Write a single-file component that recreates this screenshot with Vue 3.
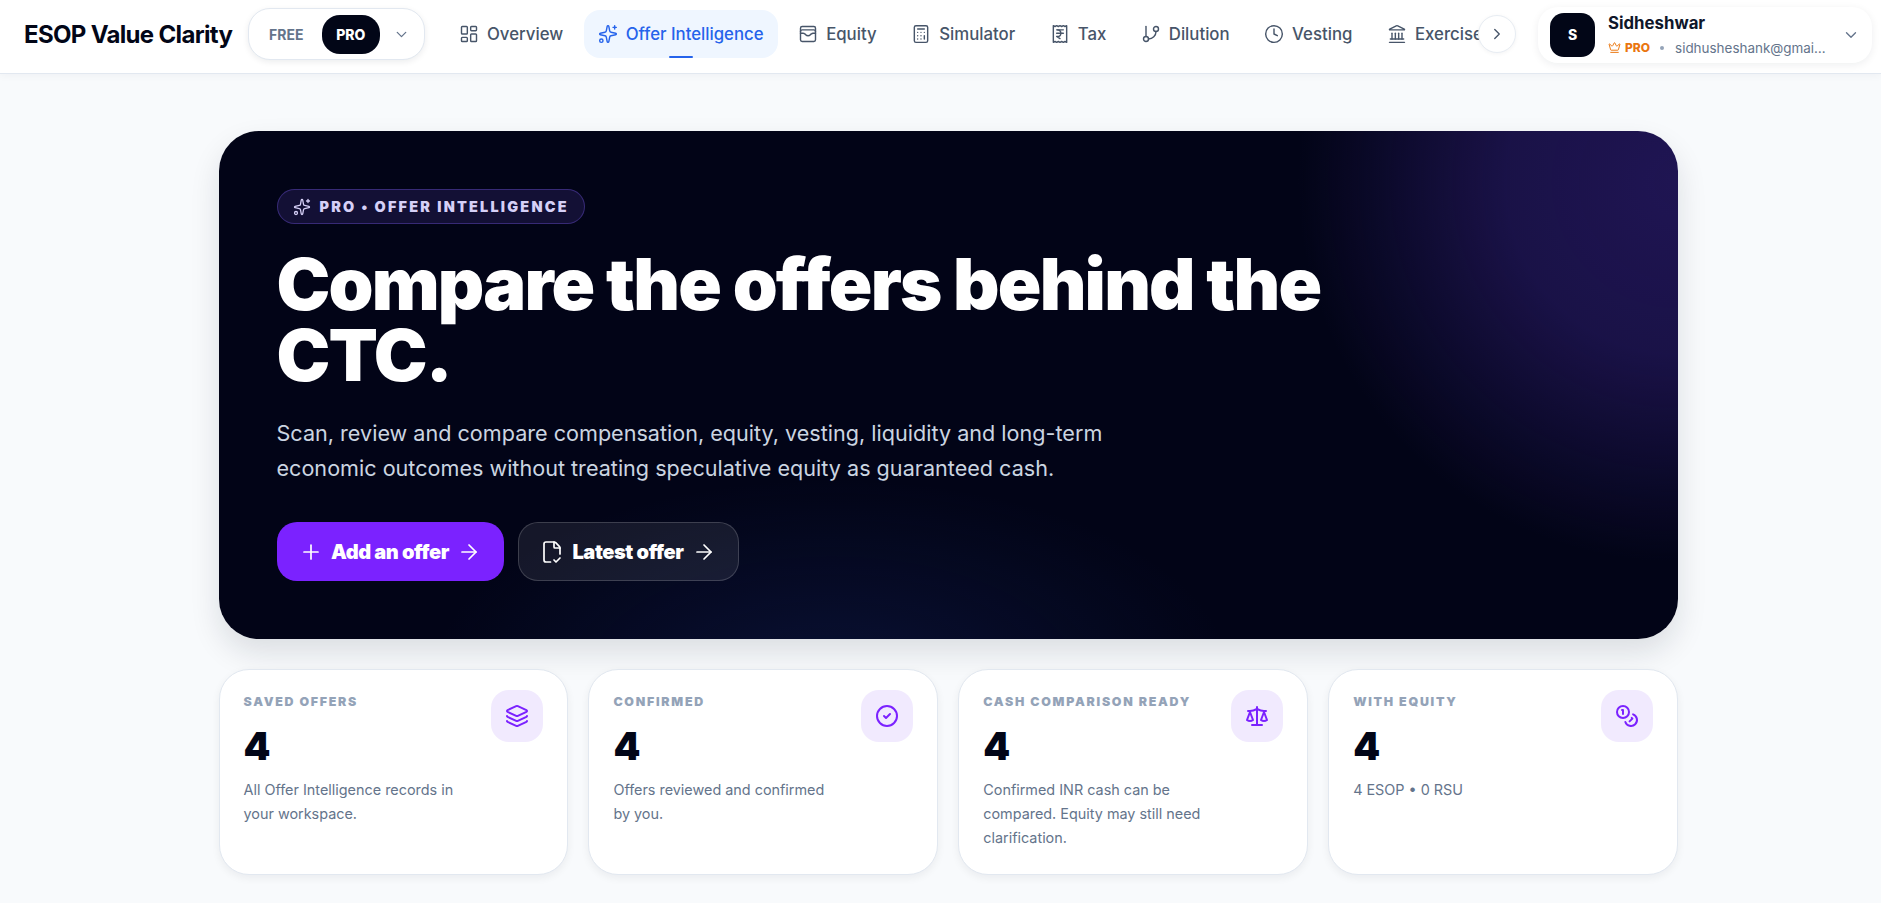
<script setup>
const stroke = {
  dashboard: '<rect x="3" y="3" width="7" height="9" rx="1"/><rect x="14" y="3" width="7" height="5" rx="1"/><rect x="14" y="12" width="7" height="9" rx="1"/><rect x="3" y="16" width="7" height="5" rx="1"/>',
  sparkles: '<path d="M11.017 2.814a1 1 0 0 1 1.966 0l1.051 5.558a2 2 0 0 0 1.594 1.594l5.558 1.051a1 1 0 0 1 0 1.966l-5.558 1.051a2 2 0 0 0-1.594 1.594l-1.051 5.558a1 1 0 0 1-1.966 0l-1.051-5.558a2 2 0 0 0-1.594-1.594l-5.558-1.051a1 1 0 0 1 0-1.966l5.558-1.051a2 2 0 0 0 1.594-1.594z"/><path d="M20 2v4"/><path d="M22 4h-4"/><circle cx="4" cy="20" r="2"/>',
  wallet: '<rect x="3" y="3" width="18" height="18" rx="2"/><path d="M3 9a2 2 0 0 1 2-2h14a2 2 0 0 1 2 2"/><path d="M3 11h3c.8 0 1.6.3 2.1.9l1.1.9c1.6 1.6 4.1 1.6 5.7 0l1.1-.9c.5-.5 1.3-.9 2.1-.9H21"/>',
  calculator: '<rect x="4" y="2" width="16" height="20" rx="2"/><path d="M8 6h8"/><path d="M16 14v4"/><path d="M16 10h.01"/><path d="M12 10h.01"/><path d="M8 10h.01"/><path d="M12 14h.01"/><path d="M8 14h.01"/><path d="M12 18h.01"/><path d="M8 18h.01"/>',
  receipt: '<path d="M4 2v20l2-1 2 1 2-1 2 1 2-1 2 1 2-1 2 1V2l-2 1-2-1-2 1-2-1-2 1-2-1-2 1Z"/><path d="M8 7h8"/><path d="M12 17.5 8 15h1a4 4 0 0 0 0-8"/><path d="M8 11h8"/>',
  branch: '<path d="M6 3v12"/><circle cx="18" cy="6" r="3"/><circle cx="6" cy="18" r="3"/><path d="M18 9a9 9 0 0 1-9 9"/>',
  clock: '<circle cx="12" cy="12" r="10"/><path d="M12 6v6l4 2"/>',
  landmark: '<path d="M3 22h18"/><path d="M4 18h16"/><path d="M6 18v-7"/><path d="M10 18v-7"/><path d="M14 18v-7"/><path d="M18 18v-7"/><path d="M11.12 2.198a2 2 0 0 1 1.76.006l7.866 3.847c.476.233.31.949-.22.949H3.474c-.53 0-.695-.716-.22-.949z"/>',
  layers: '<path d="m12.83 2.18a2 2 0 0 0-1.66 0L2.6 6.08a1 1 0 0 0 0 1.83l8.58 3.91a2 2 0 0 0 1.66 0l8.58-3.9a1 1 0 0 0 0-1.83z"/><path d="M2 12a1 1 0 0 0 .58.91l8.6 3.91a2 2 0 0 0 1.65 0l8.58-3.9A1 1 0 0 0 22 12"/><path d="M2 17a1 1 0 0 0 .58.91l8.6 3.91a2 2 0 0 0 1.65 0l8.58-3.9A1 1 0 0 0 22 17"/>',
  check: '<circle cx="12" cy="12" r="10"/><path d="m9 12 2 2 4-4"/>',
  scale: '<path d="m16 16 3-8 3 8c-.87.65-1.92 1-3 1s-2.13-.35-3-1Z"/><path d="m2 16 3-8 3 8c-.87.65-1.92 1-3 1s-2.13-.35-3-1Z"/><path d="M7 21h10"/><path d="M12 3v18"/><path d="M3 7h2c2 0 5-1 7-2 2 1 5 2 7 2h2"/>',
  coins: '<circle cx="8" cy="8" r="6"/><path d="M18.09 10.37A6 6 0 1 1 10.34 18"/><path d="M7 6h1v4"/><path d="m16.71 13.88.7.71-2.82 2.82"/>',
  plus: '<path d="M5 12h14"/><path d="M12 5v14"/>',
  arrow: '<path d="M5 12h14"/><path d="m12 5 7 7-7 7"/>',
  file: '<path d="M10.5 22H6a2 2 0 0 1-2-2V4a2 2 0 0 1 2-2h8a2.4 2.4 0 0 1 1.706.706l3.588 3.588A2.4 2.4 0 0 1 20 8v6"/><path d="M14 2v5a1 1 0 0 0 1 1h5"/><path d="m14 20 2 2 4-4"/>',
  crown: '<path d="M11.562 3.266a.5.5 0 0 1 .876 0L15.39 8.87a1 1 0 0 0 1.516.294L21.183 5.5a.5.5 0 0 1 .798.519l-2.834 10.246a1 1 0 0 1-.956.734H5.81a1 1 0 0 1-.957-.734L2.02 6.02a.5.5 0 0 1 .798-.519l4.276 3.664a1 1 0 0 0 1.516-.294z"/><path d="M5 21h14"/>',
  down: '<path d="m6 9 6 6 6-6"/>',
  right: '<path d="m9 18 6-6-6-6"/>',
}

const navItems = [
  { label: 'Overview', icon: stroke.dashboard },
  { label: 'Offer Intelligence', icon: stroke.sparkles, active: true },
  { label: 'Equity', icon: stroke.wallet },
  { label: 'Simulator', icon: stroke.calculator },
  { label: 'Tax', icon: stroke.receipt },
  { label: 'Dilution', icon: stroke.branch },
  { label: 'Vesting', icon: stroke.clock },
  { label: 'Exercise', icon: stroke.landmark },
]

const stats = [
  { label: 'Saved offers', value: 4, text: 'All Offer Intelligence records in your workspace.', icon: stroke.layers },
  { label: 'Confirmed', value: 4, text: 'Offers reviewed and confirmed by you.', icon: stroke.check },
  { label: 'Cash comparison ready', value: 4, text: 'Confirmed INR cash can be compared. Equity may still need clarification.', icon: stroke.scale },
  { label: 'With equity', value: 4, text: '4 ESOP • 0 RSU', icon: stroke.coins },
]
</script>

<template>
  <div class="page">
    <header class="topbar">
      <div class="brand">ESOP Value Clarity</div>

      <div class="plan-switch">
        <span class="plan-free">FREE</span>
        <span class="plan-pro">PRO</span>
        <svg class="ico plan-chevron" viewBox="0 0 24 24" v-html="stroke.down"></svg>
      </div>

      <div class="nav-wrap">
        <nav class="nav">
          <a v-for="item in navItems" :key="item.label" class="nav-item" :class="{ active: item.active }">
            <svg class="ico nav-ico" viewBox="0 0 24 24" v-html="item.icon"></svg>
            {{ item.label }}
          </a>
        </nav>
        <button type="button" class="nav-more">
          <svg class="ico" viewBox="0 0 24 24" v-html="stroke.right"></svg>
        </button>
      </div>

      <div class="user">
        <div class="avatar">S</div>
        <div class="user-info">
          <div class="user-name">Sidheshwar</div>
          <div class="user-meta">
            <svg class="ico crown" viewBox="0 0 24 24" v-html="stroke.crown"></svg>
            <span class="user-plan">PRO</span>
            <span class="user-dot"></span>
            <span class="user-email">sidhusheshank@gmail.com</span>
          </div>
        </div>
        <svg class="ico user-chevron" viewBox="0 0 24 24" v-html="stroke.down"></svg>
      </div>
    </header>

    <main class="content">
      <section class="hero">
        <div class="hero-badge">
          <svg class="ico badge-ico" viewBox="0 0 24 24" v-html="stroke.sparkles"></svg>
          PRO • OFFER INTELLIGENCE
        </div>
        <h1 class="hero-title">Compare the offers behind the CTC.</h1>
        <p class="hero-text">
          Scan, review and compare compensation, equity, vesting, liquidity and long-term
          economic outcomes without treating speculative equity as guaranteed cash.
        </p>
        <div class="hero-actions">
          <button type="button" class="btn btn-primary">
            <svg class="ico btn-ico" viewBox="0 0 24 24" v-html="stroke.plus"></svg>
            <span>Add an offer</span>
            <svg class="ico btn-ico" viewBox="0 0 24 24" v-html="stroke.arrow"></svg>
          </button>
          <button type="button" class="btn btn-ghost">
            <svg class="ico btn-ico" viewBox="0 0 24 24" v-html="stroke.file"></svg>
            <span>Latest offer</span>
            <svg class="ico btn-ico" viewBox="0 0 24 24" v-html="stroke.arrow"></svg>
          </button>
        </div>
      </section>

      <section class="stats">
        <article v-for="stat in stats" :key="stat.label" class="stat">
          <div class="stat-head">
            <div>
              <div class="stat-label">{{ stat.label }}</div>
              <div class="stat-value">{{ stat.value }}</div>
            </div>
            <div class="stat-tile">
              <svg class="ico stat-ico" viewBox="0 0 24 24" v-html="stat.icon"></svg>
            </div>
          </div>
          <p class="stat-text">{{ stat.text }}</p>
        </article>
      </section>
    </main>
  </div>
</template>

<style scoped>
.page {
  height: 903px;
  overflow: hidden;
  background: #f8fafc;
  font-family: Inter, 'Noto Sans', sans-serif;
  color: #020617;
}

.ico {
  display: block;
  fill: none;
  stroke: currentColor;
  stroke-width: 2;
  stroke-linecap: round;
  stroke-linejoin: round;
  flex-shrink: 0;
}

.topbar {
  display: flex;
  align-items: center;
  height: 74px;
  padding: 0 9px 0 24px;
  box-sizing: border-box;
  background: #fff;
  border-bottom: 1px solid #e2e8f0;
  box-shadow: 0 2px 8px rgba(15, 23, 42, 0.04);
}

.brand {
  width: 224px;
  margin-bottom: 4px;
  flex-shrink: 0;
  font-size: 24px;
  font-weight: 700;
  letter-spacing: -0.028em;
  white-space: nowrap;
}

.plan-switch {
  display: flex;
  align-items: center;
  width: 177px;
  height: 52px;
  margin-bottom: 5px;
  padding: 0 14px 0 20px;
  box-sizing: border-box;
  flex-shrink: 0;
  border: 1px solid #e2e8f0;
  border-radius: 22px;
  background: #fff;
  box-shadow: 0 2px 6px rgba(15, 23, 42, 0.08);
}

.plan-free {
  width: 54px;
  font-size: 14px;
  font-weight: 700;
  color: #64748b;
}

.plan-pro {
  display: flex;
  align-items: center;
  justify-content: center;
  width: 60px;
  height: 39px;
  border-radius: 18px;
  background: #020617;
  color: #fff;
  font-size: 14px;
  font-weight: 800;
}

.plan-chevron {
  width: 17px;
  height: 17px;
  margin-left: 13px;
  color: #64748b;
  stroke-width: 1.8;
}

.nav-wrap {
  position: relative;
  width: 1071px;
  margin-left: 20px;
  margin-bottom: 6px;
  flex-shrink: 0;
}

.nav {
  display: flex;
  gap: 6.5px;
  overflow: hidden;
}

.nav-item {
  position: relative;
  display: flex;
  align-items: center;
  gap: 8px;
  height: 48px;
  padding: 0 14px;
  flex-shrink: 0;
  border-radius: 16px;
  font-size: 16.8px;
  font-weight: 500;
  color: #475569;
  white-space: nowrap;
}

.nav-item.active {
  background: #eff6ff;
  color: #2563eb;
}

.nav-item.active::after {
  content: '';
  position: absolute;
  left: 50%;
  bottom: 0;
  width: 24px;
  height: 2px;
  margin-left: -12px;
  border-radius: 2px;
  background: #2563eb;
}

.nav-ico {
  width: 20px;
  height: 20px;
  stroke-width: 1.7;
}

.nav-more {
  position: absolute;
  top: 5px;
  right: 0;
  display: flex;
  align-items: center;
  justify-content: center;
  width: 38px;
  height: 38px;
  padding: 0;
  border: 1px solid #e8edf3;
  border-radius: 50%;
  background: #fff;
  color: #475569;
  box-shadow: 0 1px 4px rgba(15, 23, 42, 0.05);
}

.nav-more .ico {
  width: 18px;
  height: 18px;
  stroke-width: 1.8;
}

.user {
  display: flex;
  align-items: center;
  width: 334px;
  height: 56px;
  margin-left: auto;
  margin-bottom: 4px;
  padding: 0 12px;
  box-sizing: border-box;
  flex-shrink: 0;
  border-radius: 20px;
  background: #fff;
  box-shadow: 0 2px 8px rgba(15, 23, 42, 0.07);
}

.avatar {
  display: flex;
  align-items: center;
  justify-content: center;
  width: 45px;
  height: 44px;
  flex-shrink: 0;
  border-radius: 14px;
  background: #020617;
  color: #fff;
  font-size: 14px;
  font-weight: 800;
}

.user-info {
  width: 218px;
  margin-left: 13px;
}

.user-name {
  font-size: 16.8px;
  font-weight: 700;
  line-height: 20px;
  color: #0f172a;
}

.user-meta {
  display: flex;
  align-items: center;
  margin-top: 6px;
  height: 18px;
}

.crown {
  width: 13px;
  height: 13px;
  color: #ea760f;
  stroke-width: 1.8;
}

.user-plan {
  margin-left: 4px;
  font-size: 12px;
  font-weight: 800;
  color: #ea760f;
}

.user-dot {
  width: 4px;
  height: 4px;
  margin: 0 11px 0 10px;
  border-radius: 50%;
  background: #94a3b8;
}

.user-email {
  width: 151px;
  overflow: hidden;
  font-size: 13.44px;
  color: #64748b;
  white-space: nowrap;
  text-overflow: ellipsis;
}

.user-chevron {
  width: 18px;
  height: 18px;
  margin-left: auto;
  color: #64748b;
  stroke-width: 1.8;
}

.content {
  padding: 57px 203px 0 218.5px;
}

.hero {
  height: 508px;
  padding: 58px 58px 0;
  box-sizing: border-box;
  border-radius: 40px;
  background:
    radial-gradient(ellipse 380px 380px at 100% 10%, rgba(33, 22, 86, 0.95) 0%, rgba(30, 20, 80, 0.85) 45%, rgba(30, 20, 80, 0) 100%),
    radial-gradient(ellipse 400px 200px at 42% 108%, rgba(23, 44, 110, 0.32) 0%, rgba(23, 44, 110, 0) 100%),
    #020417;
  box-shadow: 0 14px 30px rgba(15, 23, 42, 0.12);
}

.hero-badge {
  display: inline-flex;
  align-items: center;
  gap: 10px;
  height: 35px;
  padding: 0 15px;
  box-sizing: border-box;
  border: 1px solid rgba(124, 92, 240, 0.35);
  border-radius: 18px;
  background: rgba(124, 92, 240, 0.14);
  color: #d6d0f7;
  font-size: 14.4px;
  font-weight: 900;
  letter-spacing: 0.155em;
}

.badge-ico {
  width: 18px;
  height: 18px;
  margin-right: -1px;
  stroke-width: 1.7;
}

.hero-title {
  width: 1120px;
  margin: 24px 0 0;
  font-size: 72px;
  font-weight: 900;
  line-height: 71px;
  letter-spacing: -0.025em;
  color: #fff;
}

.hero-text {
  width: 860px;
  margin: 26px 0 0;
  font-size: 21.6px;
  line-height: 35px;
  color: #cbd5e1;
}

.hero-actions {
  display: flex;
  gap: 14px;
  margin-top: 36px;
}

.btn {
  display: flex;
  align-items: center;
  justify-content: center;
  gap: 8px;
  height: 59px;
  padding: 0;
  box-sizing: border-box;
  border: 0;
  border-radius: 20px;
  color: #fff;
  font-family: inherit;
  font-size: 20px;
  font-weight: 900;
  letter-spacing: -0.02em;
}

.btn-primary {
  width: 227px;
  background: #7b22ff;
}

.btn-ghost {
  width: 221px;
  border: 1px solid rgba(255, 255, 255, 0.17);
  background: rgba(255, 255, 255, 0.08);
}

.btn-ico {
  width: 24px;
  height: 24px;
  stroke-width: 1.7;
}

.stats {
  display: grid;
  grid-template-columns: repeat(4, 1fr);
  gap: 20px;
  margin-top: 30px;
}

.stat {
  height: 206px;
  padding: 20px 24px 0;
  box-sizing: border-box;
  border: 1px solid #e2e8f0;
  border-radius: 30px;
  background: #fff;
  box-shadow: 0 3px 8px rgba(15, 23, 42, 0.06);
}

.stat-head {
  display: flex;
  justify-content: space-between;
}

.stat-label {
  margin-top: 4px;
  font-size: 12.4px;
  line-height: 16px;
  font-weight: 900;
  letter-spacing: 0.14em;
  text-transform: uppercase;
  color: #94a3b8;
}

.stat-value {
  margin-top: 14px;
  font-size: 38.4px;
  line-height: 44px;
  font-weight: 900;
  color: #020617;
}

.stat-tile {
  display: flex;
  align-items: center;
  justify-content: center;
  width: 52px;
  height: 52px;
  flex-shrink: 0;
  border-radius: 18px;
  background: #f1eafe;
  color: #7b22ff;
}

.stat-ico {
  width: 24px;
  height: 24px;
}

.stat-text {
  width: 222px;
  margin: 10px 0 0;
  font-size: 14.4px;
  line-height: 24px;
  color: #64748b;
}
</style>

<style>
html, body {
  margin: 0;
  overflow: hidden;
}
</style>
